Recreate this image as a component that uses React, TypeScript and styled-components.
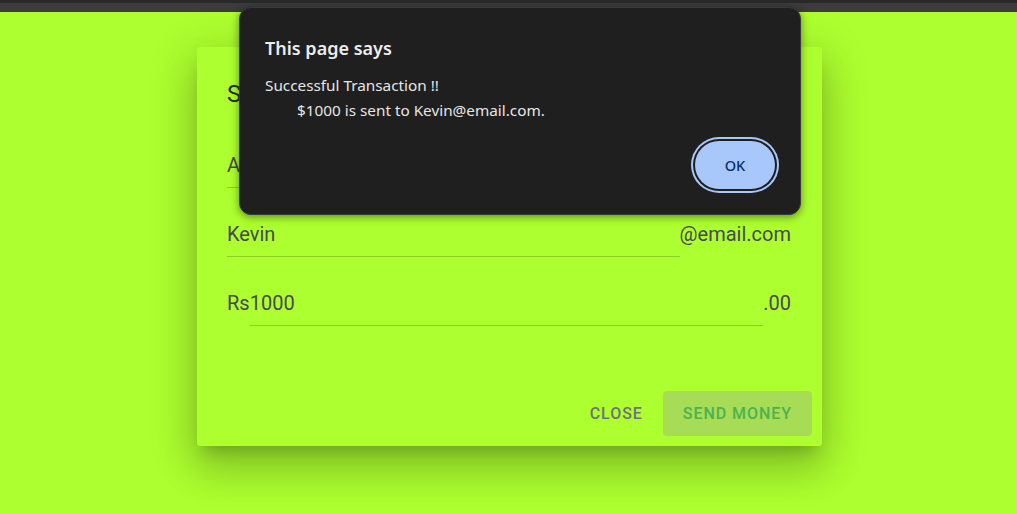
import React from "react";
import styled, { createGlobalStyle } from "styled-components";

const GlobalStyle = createGlobalStyle`
  html, body {
    margin: 0;
    padding: 0;
    background: #adff2f;
    height: 100%;
  }
  #root {
    min-height: 100%;
  }
  * { box-sizing: border-box; }
`;

const Page = styled.div`
  position: relative;
  width: 100%;
  min-height: 514px;
  background: #adff2f;
  display: flex;
  flex-direction: column;
  align-items: center;
`;

const Chrome = styled.div`
  align-self: stretch;
  height: 12px;
  background: #3c3c3c;
  border-top: 3px solid #292929;
`;

const Card = styled.section`
  margin-top: 35px;
  margin-left: 2px;
  width: 625px;
  height: 399px;
  background: #adff2f;
  border-radius: 3px;
  box-shadow: 0px 11px 15px -7px rgba(0, 0, 0, 0.2),
    0px 24px 38px 3px rgba(0, 0, 0, 0.14),
    0px 9px 46px 8px rgba(0, 0, 0, 0.12);
  display: flex;
  flex-direction: column;
  font-family: Roboto, "Liberation Sans", sans-serif;
`;

const Title = styled.h2`
  margin: 31px 31px 0 30px;
  font-size: 24px;
  line-height: 32px;
  font-weight: 400;
  color: #2a2a2a;
`;

const Fields = styled.div`
  display: flex;
  flex-direction: column;
  gap: 34px;
  margin: 43px 31px 0 30px;
`;

const Field = styled.div`
  display: flex;
  align-items: baseline;
  font-size: 20px;
  line-height: 24px;
  color: #484854;
`;

const InputBox = styled.div`
  flex: 1;
  padding-bottom: 10px;
  border-bottom: 1px solid #8ccd2c;
`;

const Adornment = styled.span`
  color: #484854;
`;

const Actions = styled.div`
  margin-top: auto;
  display: flex;
  justify-content: flex-end;
  padding: 0 10px 10px 0;
`;

const Button = styled.button<{ $primary?: boolean }>`
  height: 45px;
  padding: 0 20px;
  border: none;
  border-radius: 4px;
  font-family: Roboto, "Liberation Sans", sans-serif;
  font-size: 16px;
  font-weight: 500;
  letter-spacing: 0.95px;
  text-transform: uppercase;
  background: ${(p) => (p.$primary ? "#a7dc56" : "transparent")};
  color: ${(p) => (p.$primary ? "#4eb150" : "#71717d")};
  cursor: pointer;
`;

const Alert = styled.div`
  position: absolute;
  left: 239px;
  top: 7px;
  width: 562px;
  height: 208px;
  background: #1f1f1f;
  border: 1px solid #3a3a3a;
  border-radius: 12px;
  box-shadow: 0 2px 8px rgba(0, 0, 0, 0.45);
  padding: 28px 25px 25px 25px;
  display: flex;
  flex-direction: column;
  font-family: "Noto Sans", "Open Sans", sans-serif;
  color: #e6e6e6;
`;

const AlertTitle = styled.div`
  font-size: 18px;
  font-weight: 600;
  line-height: 24px;
  color: #ececec;
`;

const AlertMessage = styled.div`
  margin-top: 13px;
  font-size: 15.3px;
  line-height: 25px;
`;

const Indented = styled.div`
  padding-left: 32px;
`;

const AlertActions = styled.div`
  margin-top: auto;
  display: flex;
  justify-content: flex-end;
`;

const OkButton = styled.button`
  width: 80px;
  height: 48px;
  border: none;
  border-radius: 24px;
  background: #a8c7fa;
  box-shadow: 0 0 0 2px #1f1f1f, 0 0 0 4px #a8c7fa;
  color: #062e6f;
  font-family: "Noto Sans", "Open Sans", sans-serif;
  font-size: 14.5px;
  font-weight: 500;
  cursor: pointer;
`;

export default function App() {
  return (
    <>
      <GlobalStyle />
      <Page>
        <Chrome />
        <Card>
          <Title>Send Money</Title>
          <Fields>
            <Field>
              <InputBox>Alex</InputBox>
            </Field>
            <Field>
              <InputBox>Kevin</InputBox>
              <Adornment>@email.com</Adornment>
            </Field>
            <Field>
              <Adornment>Rs</Adornment>
              <InputBox>1000</InputBox>
              <Adornment>.00</Adornment>
            </Field>
          </Fields>
          <Actions>
            <Button>Close</Button>
            <Button $primary>Send Money</Button>
          </Actions>
        </Card>
        <Alert role="alertdialog">
          <AlertTitle>This page says</AlertTitle>
          <AlertMessage>
            <div>Successful Transaction !!</div>
            <Indented>$1000 is sent to Kevin@email.com.</Indented>
          </AlertMessage>
          <AlertActions>
            <OkButton>OK</OkButton>
          </AlertActions>
        </Alert>
      </Page>
    </>
  );
}
